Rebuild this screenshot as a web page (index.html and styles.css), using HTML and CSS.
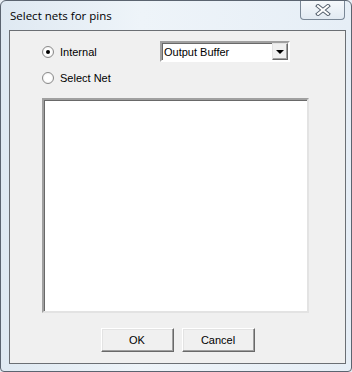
FILE: index.html
```html
<!DOCTYPE html>
<html lang="en">

<head>
    <meta charset="utf-8">
    <title>Select nets for pins</title>
    <link rel="stylesheet" href="styles.css">
</head>

<body>

    <div class="window">

        <header class="titlebar">
            <span class="title">Select nets for pins</span>
            <button class="close">
                <svg width="16" height="12" viewBox="0 0 16 12">
                    <path d="M3 2 L13 10 M13 2 L3 10" stroke="#55606e" stroke-width="4" stroke-linecap="square" />
                    <path d="M3 2 L13 10 M13 2 L3 10" stroke="#ffffff" stroke-width="2" stroke-linecap="square" />
                </svg>
            </button>
        </header>

        <section class="client">

            <div class="row">
                <label class="radio-label">
                    <span class="radio checked"></span> Internal
                </label>
                <div class="combo">
                    <span class="combo-text">Output Buffer</span>
                    <span class="combo-btn"><span class="arrow"></span></span>
                </div>
            </div>

            <div class="row second">
                <label class="radio-label">
                    <span class="radio"></span> Select Net
                </label>
            </div>

            <div class="listbox"></div>

            <div class="buttons">
                <button class="btn">OK</button>
                <button class="btn">Cancel</button>
            </div>

        </section>

    </div>

</body>

</html>
```

FILE: styles.css
```css
html {
    background-color: #e9eff5;
}

body {
    margin: 0;
}

.window {
    width: 352px;
    height: 372px;
    box-sizing: border-box;
    border: 1px solid #5b6470;
    border-radius: 6px 6px 4px 4px;
    background: linear-gradient(to right, #dfe9f2, #eef4f9 40%, #e6eef6);
    display: flex;
    flex-direction: column;
    overflow: hidden;
}

.titlebar {
    height: 29px;
    display: flex;
    align-items: flex-start;
    justify-content: space-between;
}

.title {
    font-family: "Open Sans", "Noto Sans", sans-serif;
    font-size: 11.5px;
    color: #000;
    margin: 7px 0 0 9px;
}

.close {
    width: 45px;
    height: 20px;
    margin: -1px 6px 0 0;
    padding: 0;
    border: 1px solid #7a8796;
    border-top: none;
    border-radius: 0 0 4px 4px;
    background: linear-gradient(#f6f9fc, #e2eaf2);
    display: flex;
    align-items: center;
    justify-content: center;
}

.client {
    flex: 1;
    margin: 0 5px 7px 8px;
    border: 1px solid #6b6f74;
    background-color: #f0f0f0;
    padding: 10px 0 0 32px;
    font-family: "Liberation Sans", Arial, sans-serif;
    font-size: 11px;
    color: #000;
}

.row {
    display: flex;
    align-items: center;
    height: 21px;
}

.second {
    margin-top: 5px;
}

.radio-label {
    display: flex;
    align-items: center;
    gap: 6px;
    width: 118px;
}

.radio {
    width: 12px;
    height: 12px;
    border-radius: 50%;
    border: 1px solid #8a8a8a;
    background: radial-gradient(circle, #ffffff 45%, #e4e4e4 100%);
    box-sizing: border-box;
    position: relative;
}

.checked::after {
    content: "";
    position: absolute;
    left: 3px;
    top: 3px;
    width: 4px;
    height: 4px;
    border-radius: 50%;
    background: #000;
}

.combo {
    width: 130px;
    height: 21px;
    box-sizing: border-box;
    border: 2px solid;
    border-color: #a0a0a0 #ffffff #ffffff #a0a0a0;
    box-shadow: inset 1px 1px 0 #696969;
    background: #fff;
    display: flex;
    align-items: center;
    justify-content: space-between;
}

.combo-text {
    padding-left: 2px;
}

.combo-btn {
    width: 16px;
    height: 17px;
    box-sizing: border-box;
    border: 1px solid;
    border-color: #e3e3e3 #696969 #696969 #e3e3e3;
    box-shadow: inset -1px -1px 0 #a0a0a0;
    background: #f0f0f0;
    display: flex;
    align-items: center;
    justify-content: center;
}

.arrow {
    width: 0;
    height: 0;
    border-left: 4px solid transparent;
    border-right: 4px solid transparent;
    border-top: 4px solid #000;
}

.listbox {
    width: 267px;
    height: 215px;
    box-sizing: border-box;
    margin-top: 10px;
    border: 2px solid;
    border-color: #a0a0a0 #e3e3e3 #e3e3e3 #a0a0a0;
    box-shadow: inset 1px 1px 0 #696969;
    background: #fff;
}

.buttons {
    display: flex;
    justify-content: center;
    gap: 8px;
    margin: 15px 0 0 -32px;
}

.btn {
    width: 73px;
    height: 24px;
    border: 1px solid;
    border-color: #ffffff #696969 #696969 #ffffff;
    box-shadow: inset -1px -1px 0 #a0a0a0, inset 1px 1px 0 #e3e3e3;
    background: #f0f0f0;
    font-family: "Liberation Sans", Arial, sans-serif;
    font-size: 11px;
    color: #000;
    padding: 0;
}
```
